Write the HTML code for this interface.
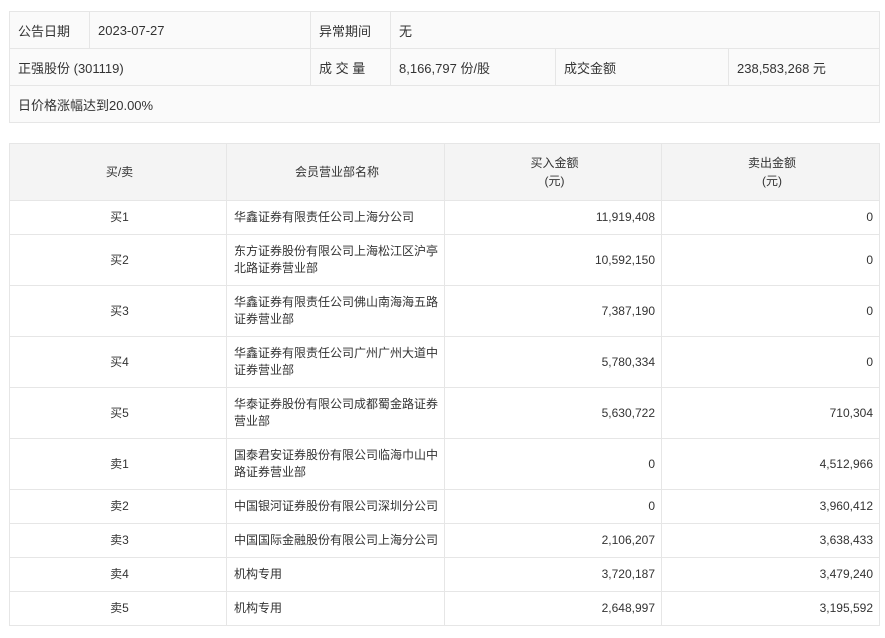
<!DOCTYPE html>
<html><head><meta charset="utf-8"><style>
body{margin:0;background:#fff;font-family:"Liberation Sans","Noto Sans CJK SC",sans-serif;color:#333;}
table{border-collapse:collapse;position:absolute;left:9px;width:870px;table-layout:fixed;}
td,th{border:1px solid #e6e6e6;padding:0 4px 0 7px;font-weight:normal;}
#t1{top:11px;background:#fafafa;font-size:13px;}
#t1 td{height:36px;padding-left:8px;}
#t2{top:143px;font-size:12px;}
#t2 th{background:#f4f4f4;height:56px;text-align:center;line-height:18px;}
#t2 td{line-height:17px;}
#t2 td.r{padding-right:6px;}
.c{text-align:center}.r{text-align:right}
.h1{height:33px}.h2{height:50px}
</style></head><body>
<table id="t1">
<colgroup><col style="width:80px"><col style="width:221px"><col style="width:80px"><col style="width:165px"><col style="width:173px"><col style="width:151px"></colgroup>
<tr><td>公告日期</td><td>2023-07-27</td><td>异常期间</td><td colspan="3">无</td></tr>
<tr><td colspan="2">正强股份 (301119)</td><td>成 交 量</td><td>8,166,797 份/股</td><td>成交金额</td><td>238,583,268 元</td></tr>
<tr><td colspan="6">日价格涨幅达到20.00%</td></tr>
</table>
<table id="t2">
<colgroup><col style="width:217px"><col style="width:218px"><col style="width:217px"><col style="width:218px"></colgroup>
<tr><th>买/卖</th><th>会员营业部名称</th><th>买入金额<br>(元)</th><th>卖出金额<br>(元)</th></tr>
<tr><td class="c h1">买1</td><td>华鑫证券有限责任公司上海分公司</td><td class="r">11,919,408</td><td class="r">0</td></tr>
<tr><td class="c h2">买2</td><td>东方证券股份有限公司上海松江区沪亭<br>北路证券营业部</td><td class="r">10,592,150</td><td class="r">0</td></tr>
<tr><td class="c h2">买3</td><td>华鑫证券有限责任公司佛山南海海五路<br>证券营业部</td><td class="r">7,387,190</td><td class="r">0</td></tr>
<tr><td class="c h2">买4</td><td>华鑫证券有限责任公司广州广州大道中<br>证券营业部</td><td class="r">5,780,334</td><td class="r">0</td></tr>
<tr><td class="c h2">买5</td><td>华泰证券股份有限公司成都蜀金路证券<br>营业部</td><td class="r">5,630,722</td><td class="r">710,304</td></tr>
<tr><td class="c h2">卖1</td><td>国泰君安证券股份有限公司临海巾山中<br>路证券营业部</td><td class="r">0</td><td class="r">4,512,966</td></tr>
<tr><td class="c h1">卖2</td><td style="white-space:nowrap">中国银河证券股份有限公司深圳分公司</td><td class="r">0</td><td class="r">3,960,412</td></tr>
<tr><td class="c h1">卖3</td><td style="white-space:nowrap">中国国际金融股份有限公司上海分公司</td><td class="r">2,106,207</td><td class="r">3,638,433</td></tr>
<tr><td class="c h1">卖4</td><td>机构专用</td><td class="r">3,720,187</td><td class="r">3,479,240</td></tr>
<tr><td class="c h1">卖5</td><td>机构专用</td><td class="r">2,648,997</td><td class="r">3,195,592</td></tr>
</table>
</body></html>
